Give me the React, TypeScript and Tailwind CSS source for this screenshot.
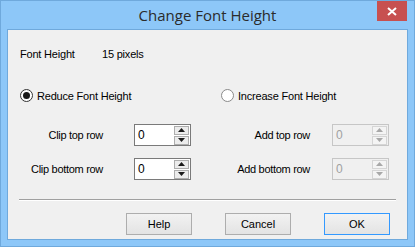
import React from "react";

const font = { fontFamily: '"Liberation Sans", Arial, sans-serif' };

function Radio({ checked, label }: { checked?: boolean; label: string }) {
  return (
    <div className="flex items-center gap-[4px]">
      <div
        className={`w-[13px] h-[13px] rounded-full border flex items-center justify-center bg-white ${
          checked ? "border-[#333333]" : "border-[#8a8a8a]"
        }`}
      >
        {checked && <div className="w-[7px] h-[7px] rounded-full bg-[#1a1a1a]" />}
      </div>
      <span className="text-[11px] tracking-[-0.2px] text-black">{label}</span>
    </div>
  );
}

function Arrow({ up, disabled }: { up?: boolean; disabled?: boolean }) {
  return (
    <div
      className={`w-[15px] h-[9px] flex items-center justify-center border ${
        disabled ? "border-[#d5d5d5] bg-[#f4f4f4]" : "border-[#adadad] bg-[#ececec]"
      }`}
    >
      <svg width="7" height="4" viewBox="0 0 7 4">
        <polygon
          points={up ? "0,4 7,4 3.5,0" : "0,0 7,0 3.5,4"}
          fill={disabled ? "#a8a8a8" : "#1a1a1a"}
        />
      </svg>
    </div>
  );
}

function Spin({ disabled }: { disabled?: boolean }) {
  return (
    <div
      className={`w-[57px] h-[22px] border flex items-center justify-between pl-[3px] pr-[1px] ${
        disabled ? "border-[#c6c6c6] bg-[#f0f0f0]" : "border-[#7a7a7a] bg-white"
      }`}
    >
      <span className={`text-[12px] ${disabled ? "text-[#a0a0a0]" : "text-black"}`}>0</span>
      <div className="flex flex-col gap-[1px]">
        <Arrow up disabled={disabled} />
        <Arrow disabled={disabled} />
      </div>
    </div>
  );
}

function Field({ label, disabled, labelW }: { label: string; disabled?: boolean; labelW: string }) {
  return (
    <div className="flex items-center">
      <span className={`${labelW} text-right text-[11px] tracking-[-0.3px] text-black`}>{label}</span>
      <Spin disabled={disabled} />
    </div>
  );
}

function Btn({ label, focus }: { label: string; focus?: boolean }) {
  return (
    <div
      className={`w-[66px] h-[22px] flex items-center justify-center text-[11px] text-black bg-gradient-to-b from-[#f2f2f2] to-[#e3e3e3] border ${
        focus ? "border-[#3399ff]" : "border-[#adadad]"
      }`}
    >
      {label}
    </div>
  );
}

export default function App() {
  return (
    <div
      className="w-[415px] h-[247px] bg-[#8dc7f8] border border-[#6fa9dc] flex flex-col overflow-hidden"
      style={font}
    >
      {/* Title bar */}
      <div className="relative h-[28px] flex items-center justify-center">
        <span
          className="text-[15px] text-[#2b2b2b] mt-[1px]"
          style={{ fontFamily: '"Open Sans", "Noto Sans", sans-serif' }}
        >
          Change Font Height
        </span>
        <div className="absolute right-[7px] top-0 w-[30px] h-[20px] bg-[#c75050] flex items-center justify-center">
          <svg width="10" height="9" viewBox="0 0 10 9">
            <path d="M1 1 L9 8 M9 1 L1 8" stroke="white" strokeWidth="2" />
          </svg>
        </div>
      </div>

      {/* Client */}
      <div className="mx-[6px] mb-[6px] flex-1 border border-[#6fa9dc] bg-[#f0f0f0]">
        <div className="pl-[12px] pt-[16px] flex text-[11px] tracking-[-0.2px] text-black">
          <span className="w-[82px]">Font Height</span>
          <span>15 pixels</span>
        </div>

        <div className="pl-[12px] mt-[25px] flex">
          <div className="w-[201px]">
            <Radio checked label="Reduce Font Height" />
          </div>
          <Radio label="Increase Font Height" />
        </div>

        <div className="mt-[20px] flex">
          <div className="w-[198px] flex flex-col gap-[12px]">
            <Field label="Clip top row" labelW="w-[126px] pr-[31px]" />
            <Field label="Clip bottom row" labelW="w-[126px] pr-[31px]" />
          </div>
          <div className="flex flex-col gap-[12px]">
            <Field label="Add top row" labelW="w-[126px] pr-[22px]" disabled />
            <Field label="Add bottom row" labelW="w-[126px] pr-[22px]" disabled />
          </div>
        </div>

        <div className="mx-[11px] mt-[19px] h-[2px] border-t border-[#a0a0a0] border-b border-b-white" />

        <div className="mt-[12px] pl-[118px] flex gap-[33px]">
          <Btn label="Help" />
          <Btn label="Cancel" />
          <Btn label="OK" focus />
        </div>
      </div>
    </div>
  );
}
